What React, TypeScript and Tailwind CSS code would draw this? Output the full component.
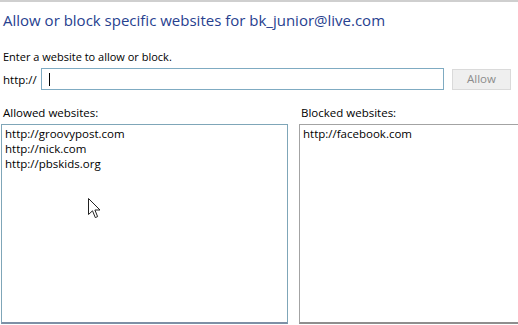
const font = { fontFamily: '"Open Sans", "Noto Sans", sans-serif' };

const allowed = ['http://groovypost.com', 'http://nick.com', 'http://pbskids.org'];
const blocked = ['http://facebook.com'];

function Pointer() {
  return (
    <svg
      className="absolute left-[88px] top-[196px]"
      width="13"
      height="21"
      viewBox="0 0 13 21"
      aria-hidden
    >
      <path
        d="M0.5 0.5 L0.5 16.5 L4.5 12.8 L7.3 19.6 L9.6 18.6 L6.9 12 L12 12 Z"
        fill="#fff"
        stroke="#222"
        strokeWidth="1"
        strokeLinejoin="round"
      />
    </svg>
  );
}

export default function App() {
  return (
    <div
      className="relative w-[518px] h-[325px] overflow-hidden bg-white border-t-2 border-[#cfcfcf] text-black"
      style={font}
    >
      <h1 className="pl-[3px] pt-[7px] text-[15px] leading-[22px] font-normal text-[#27418f]">
        Allow or block specific websites for bk_junior@live.com
      </h1>

      <p className="mt-[18px] pl-[3px] text-[11px] leading-[15px]">Enter a website to allow or block.</p>

      <div className="mt-[4px] flex items-center">
        <span className="pl-[3px] w-[41px] text-[11.5px] leading-[15px]">http://</span>
        <div className="flex items-center w-[403px] h-[22px] border border-[#7fabc2] pl-[7px]">
          <div className="w-px h-[13px] bg-black" />
        </div>
        <button className="ml-[8px] w-[59px] h-[21px] border border-[#dadada] bg-[#efefef] text-[11.5px] text-[#8c8c8c]">
          Allow
        </button>
      </div>

      <div className="mt-[15px] flex">
        <div className="w-[287px] ml-px flex flex-col">
          <p className="pl-[2px] text-[11.5px] leading-[15px]">Allowed websites:</p>
          <ul className="mt-[4px] h-[200px] border border-b-2 border-[#7fa6b8] border-b-[#7d90a6] px-[3px] pt-px text-[11.5px] leading-[15px]">
            {allowed.map((site) => (
              <li key={site}>{site}</li>
            ))}
          </ul>
        </div>
        <div className="ml-[11px] flex-1 flex flex-col">
          <p className="pl-[2px] text-[11.5px] leading-[15px]">Blocked websites:</p>
          <ul className="mt-[4px] h-[200px] border border-b-2 border-r-0 border-[#a3a3a3] border-b-[#8e8e8e] px-[3px] pt-px text-[11.5px] leading-[15px]">
            {blocked.map((site) => (
              <li key={site}>{site}</li>
            ))}
          </ul>
        </div>
      </div>

      <Pointer />
    </div>
  );
}
